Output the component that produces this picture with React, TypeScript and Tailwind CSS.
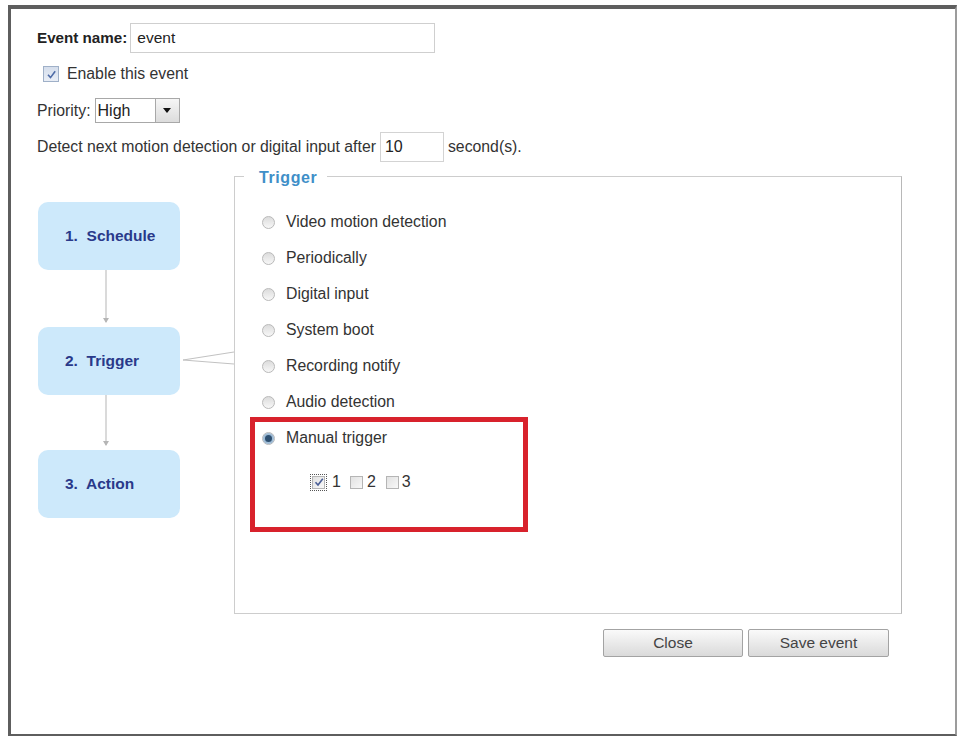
import React from "react";

const triggers = [
  "Video motion detection",
  "Periodically",
  "Digital input",
  "System boot",
  "Recording notify",
  "Audio detection",
];

function Radio({ checked = false }: { checked?: boolean }) {
  return (
    <span className="w-[13px] h-[13px] rounded-full border border-[#b9b9b9] bg-gradient-to-b from-[#dcdcdc] to-[#f7f7f7] flex items-center justify-center shrink-0">
      {checked && <span className="w-[7px] h-[7px] rounded-full bg-[#2d4f70] ring-2 ring-[#9fbcd6]" />}
    </span>
  );
}

function Box({ checked = false }: { checked?: boolean }) {
  return (
    <span className="w-[13px] h-[13px] border border-[#b5b5b5] bg-gradient-to-br from-[#e2e2e2] to-[#f8f8f8] flex items-center justify-center shrink-0">
      {checked && (
        <svg width="10" height="10" viewBox="0 0 10 10">
          <path d="M1.5 5.2 L4 8 L8.8 1.8" fill="none" stroke="#4a5e96" strokeWidth="1.6" />
        </svg>
      )}
    </span>
  );
}

function Step({ label }: { label: string }) {
  return (
    <div className="h-[68px] w-[142px] rounded-[10px] bg-[#cde9fb] flex items-center pl-[27px] text-[15.5px] font-bold text-[#29398a] whitespace-pre">
      {label}
    </div>
  );
}

function Arrow({ h }: { h: number }) {
  return (
    <svg width="142" height={h} className="block">
      <line x1="68" y1="0" x2="68" y2={h - 5} stroke="#b5b5b5" strokeWidth="1" />
      <path d={`M65 ${h - 9} L68 ${h - 4} L71 ${h - 9} Z`} fill="#b5b5b5" />
    </svg>
  );
}

export default function App() {
  return (
    <div className="w-[959px] h-[737px] bg-white pt-[5px] pl-[8px] font-['Liberation_Sans',Arial,sans-serif] text-[#333] text-[15.8px]">
      <div className="w-[949px] h-[731px] border-t-[4px] border-l-[3px] border-b-[2px] border-r-[2px] border-[#5e5e5e] border-r-[#9c9c9c] pl-[26px]">
        {/* event name */}
        <div className="flex items-center mt-[14px]">
          <span className="font-bold text-[#222] text-[15.2px]">Event name:</span>
          <div className="ml-[3px] w-[305px] h-[30px] border border-[#cfcfcf] flex items-center pl-[6px] text-[15.5px] text-[#222]">
            event
          </div>
        </div>

        <div className="flex items-center mt-[13px] h-[16px] ml-[6px]">
          <span className="w-[16px] h-[16px] border border-[#9fb0c8] bg-gradient-to-b from-[#d5deec] to-[#e9eef6] flex items-center justify-center">
            <svg width="11" height="11" viewBox="0 0 11 11">
              <path d="M2 5.8 L4.5 8.6 L9.2 2.2" fill="none" stroke="#4d6aa6" strokeWidth="1.6" />
            </svg>
          </span>
          <span className="ml-[8px]">Enable this event</span>
        </div>

        <div className="flex items-center mt-[16px]">
          <span>Priority:</span>
          <div className="ml-[4px] w-[85px] h-[25px] border border-[#a8a8a8] flex items-stretch">
            <span className="flex-1 flex items-center pl-[2px] text-[16px] text-[#222]">High</span>
            <span className="w-[24px] border-l border-[#a8a8a8] bg-gradient-to-b from-[#f6f6f6] to-[#dcdcdc] flex items-center justify-center">
              <svg width="8" height="5" viewBox="0 0 8 5">
                <path d="M0 0 L8 0 L4 5 Z" fill="#111" />
              </svg>
            </span>
          </div>
        </div>

        <div className="flex items-center mt-[9px]">
          <span>Detect next motion detection or digital input after</span>
          <div className="ml-[4px] w-[64px] h-[30px] border border-[#d3d3d3] flex items-center pl-[4px] text-[16px] text-[#222]">10</div>
          <span className="ml-[4px]">second(s).</span>
        </div>

        {/* main section */}
        <div className="flex mt-[14px]">
          <div className="ml-[1px] w-[142px] pt-[26px] flex flex-col">
            <Step label="1.  Schedule" />
            <Arrow h={57} />
            <Step label="2.  Trigger" />
            <Arrow h={55} />
            <Step label="3.  Action" />
          </div>

          <svg width="54" height="438" className="block shrink-0">
            <line x1="3" y1="184" x2="54" y2="176" stroke="#c2c2c2" strokeWidth="1.2" />
            <line x1="3" y1="184" x2="54" y2="188" stroke="#c2c2c2" strokeWidth="1.2" />
          </svg>

          <div className="relative w-[668px] h-[438px] border border-[#cdcdcd] border-r-[#b8b8b8] pt-[27px]">
            <div className="absolute left-[9px] top-[-8px] bg-white pl-[15px] pr-[10px] text-[16px] leading-[18px] font-bold tracking-[0.6px] text-[#3f8fc8]">
              Trigger
            </div>

            {triggers.map((t) => (
              <div key={t} className="h-[36px] flex items-center pl-[27px]">
                <Radio />
                <span className="ml-[11px]">{t}</span>
              </div>
            ))}

            <div className="ml-[15px] -mt-[3px] w-[278px] h-[115px] border-[5px] border-[#d8222c]">
              <div className="h-[32px] flex items-center pl-[7px]">
                <Radio checked />
                <span className="ml-[11px]">Manual trigger</span>
              </div>
              <div className="mt-[18px] h-[20px] flex items-center pl-[55px] text-[16px]">
                <span className="border border-dotted border-[#555] p-[1px]">
                  <Box checked />
                </span>
                <span className="ml-[5px]">1</span>
                <span className="ml-[9px]"><Box /></span>
                <span className="ml-[4px]">2</span>
                <span className="ml-[10px]"><Box /></span>
                <span className="ml-[3px]">3</span>
              </div>
            </div>
          </div>
        </div>

        {/* buttons */}
        <div className="w-[865px] flex justify-end gap-[5px] pr-[13px] mt-[15px]">
          <button className="w-[140px] h-[28px] border border-[#a3a3a3] rounded-[2px] bg-gradient-to-b from-[#fafafa] to-[#dadada] text-[15.5px] text-[#444]">
            Close
          </button>
          <button className="w-[141px] h-[28px] border border-[#a3a3a3] rounded-[2px] bg-gradient-to-b from-[#fafafa] to-[#dadada] text-[15.5px] text-[#444]">
            Save event
          </button>
        </div>
      </div>
    </div>
  );
}
